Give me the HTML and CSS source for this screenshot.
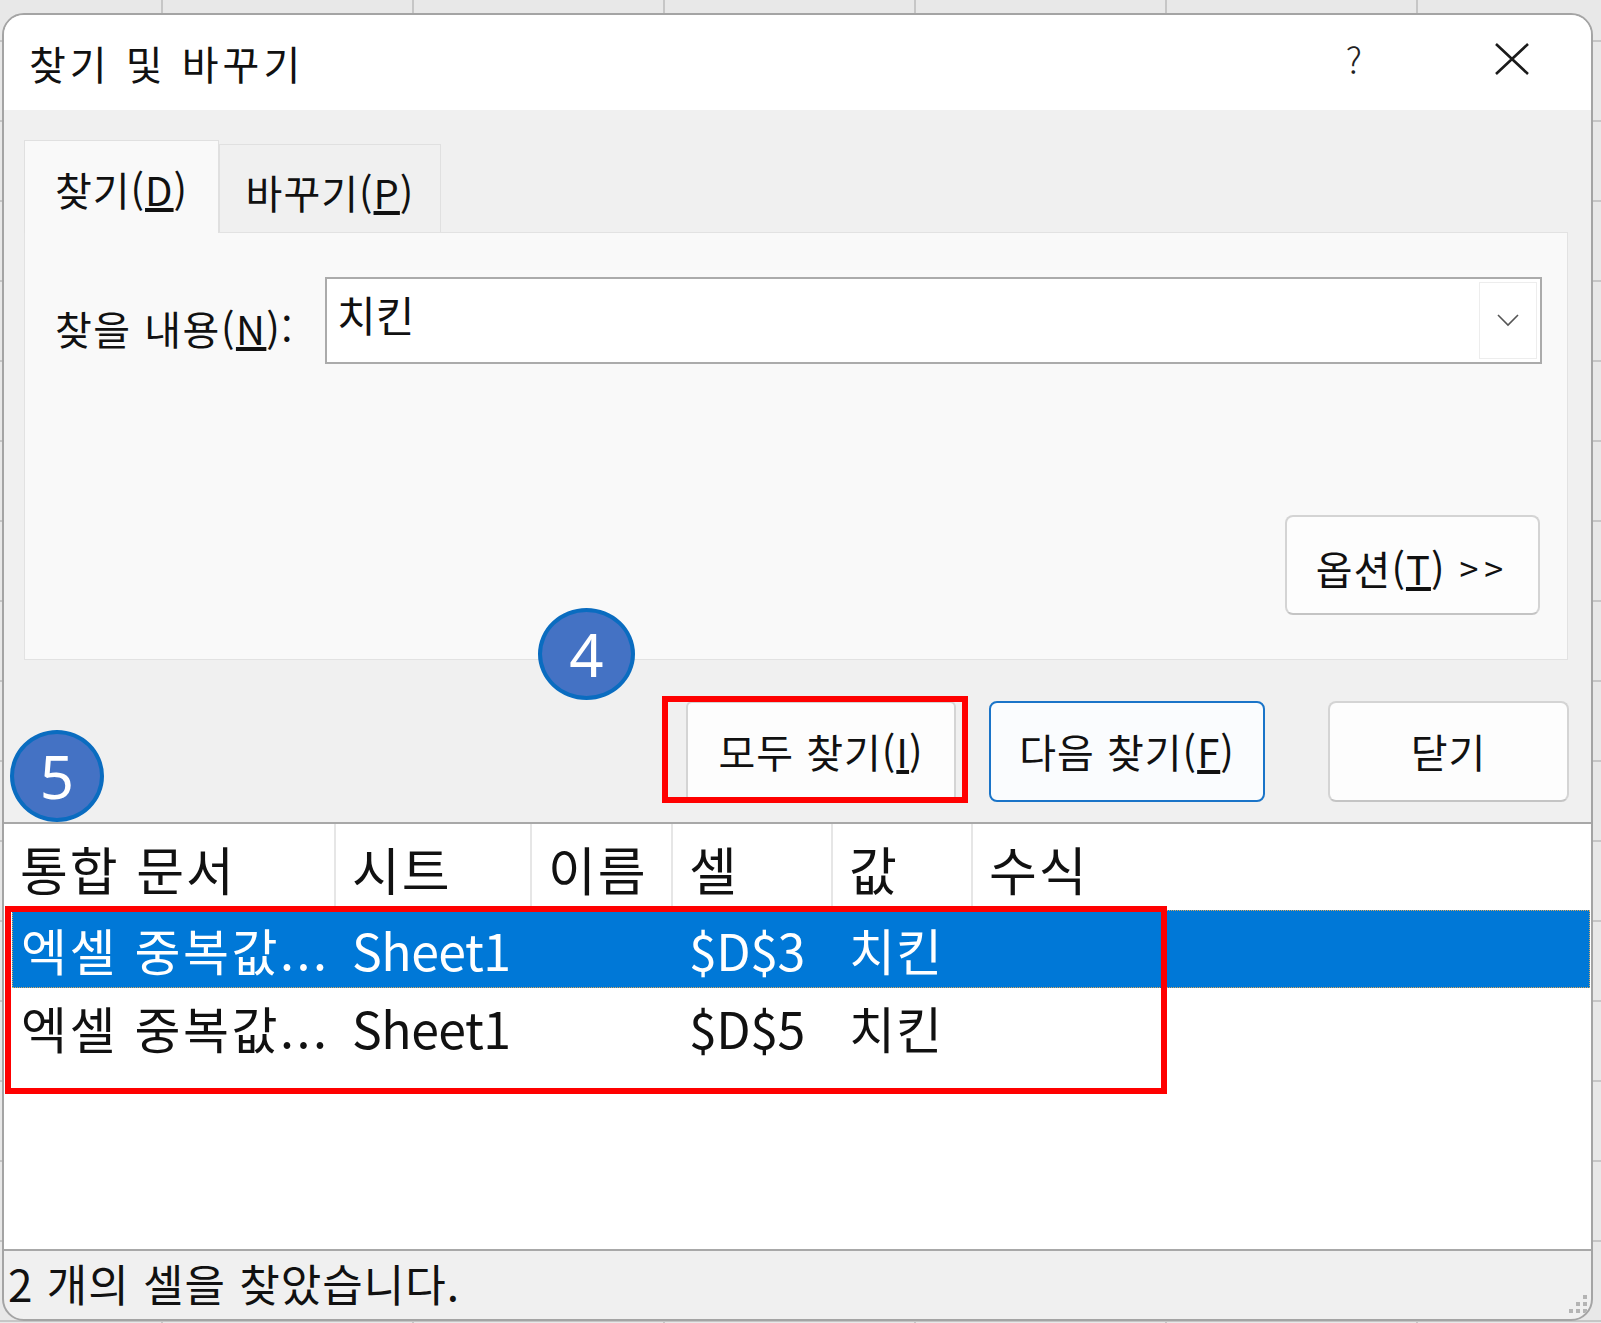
FILE: index.html
```html
<!DOCTYPE html>
<html lang="ko">
<head>
<meta charset="utf-8">
<title>찾기 및 바꾸기</title>
<link rel="stylesheet" href="styles.css">
</head>
<body>
<div class="desk">
  <div class="dialog">
    <div class="titlebar">
      <span class="title">찾기 및 바꾸기</span>
      <span class="help">?</span>
      <svg class="close" width="36" height="32" viewBox="0 0 36 32"><path d="M2 1 L34 31 M34 1 L2 31" stroke="#1b1b1b" stroke-width="2.6" fill="none"/></svg>
    </div>
    <div class="body">
      <div class="tabs">
        <div class="tab active">찾기(<u>D</u>)</div>
        <div class="tab">바꾸기(<u>P</u>)</div>
      </div>
      <div class="panel">
        <div class="findrow">
          <span class="lbl">찾을 내용(<u>N</u>):</span>
          <div class="combo">
            <span class="combo-text">치킨</span>
            <div class="combo-btn">
              <svg width="24" height="14" viewBox="0 0 24 14"><path d="M2 2 L12 12 L22 2" stroke="#555" stroke-width="1.6" fill="none"/></svg>
            </div>
          </div>
        </div>
        <div class="optrow">
          <div class="btn opt">옵션(<u>T</u>) <span class="gt">&gt;&gt;</span></div>
        </div>
      </div>
      <div class="actions">
        <div class="btn findall">모두 찾기(<u>I</u>)</div>
        <div class="btn findnext">다음 찾기(<u>F</u>)</div>
        <div class="btn closebtn">닫기</div>
      </div>
    </div>
    <div class="results">
      <div class="rgrid rhead">
        <div class="hc">통합 문서</div>
        <div class="hc">시트</div>
        <div class="hc">이름</div>
        <div class="hc">셀</div>
        <div class="hc">값</div>
        <div class="hc last">수식</div>
      </div>
      <div class="rgrid rrow sel">
        <div class="c first">엑셀 중복값...</div>
        <div class="c latin">Sheet1</div>
        <div class="c"></div>
        <div class="c latin">$D$3</div>
        <div class="c">치킨</div>
        <div class="c"></div>
      </div>
      <div class="rgrid rrow">
        <div class="c first">엑셀 중복값...</div>
        <div class="c latin">Sheet1</div>
        <div class="c"></div>
        <div class="c latin">$D$5</div>
        <div class="c">치킨</div>
        <div class="c"></div>
      </div>
    </div>
    <div class="status">
      <span>2 개의 셀을 찾았습니다.</span>
      <svg class="grip" width="24" height="22" viewBox="0 0 24 22">
        <rect x="18" y="0" width="4" height="4" fill="#b4b4b4"/>
        <rect x="11" y="7" width="4" height="4" fill="#b4b4b4"/>
        <rect x="18" y="7" width="4" height="4" fill="#b4b4b4"/>
        <rect x="4" y="14" width="4" height="4" fill="#b4b4b4"/>
        <rect x="11" y="14" width="4" height="4" fill="#b4b4b4"/>
        <rect x="18" y="14" width="4" height="4" fill="#b4b4b4"/>
      </svg>
    </div>

    <div class="mark circle4">4</div>
    <div class="mark circle5">5</div>
    <div class="redbox red1"></div>
    <div class="redbox red2"></div>
  </div>
</div>
</body>
</html>
```
FILE: styles.css
```css
* { box-sizing: border-box; }
html, body { margin: 0; padding: 0; }
body {
  width: 1601px;
  height: 1323px;
  overflow: hidden;
  font-family: "Noto Sans CJK KR", "Noto Sans", sans-serif;
  color: #111;
  background-color: #e8e8e8;
  background-image:
    linear-gradient(to right, #c6c6c6 2px, transparent 2px),
    linear-gradient(to bottom, #c6c6c6 2px, transparent 2px);
  background-size: 251px 100%, 100% 80px;
  background-position: 161px 0, 0 40px;
}
.desk { padding: 13px 0 0 2px; }
.dialog {
  position: relative;
  width: 1591px;
  height: 1308px;
  border: 2px solid #a4a4a4;
  border-radius: 22px;
  background: #f0f0f0;
  overflow: hidden;
  display: flex;
  flex-direction: column;
}
.titlebar {
  height: 95px;
  background: #ffffff;
  display: flex;
  align-items: center;
  padding: 0 61px 0 25px;
}
.title { font-size: 40px; letter-spacing: 4px; flex: 1; padding-top: 2px; }
.help { font-size: 36px; font-weight: 300; color: #222; margin-right: 132px; padding-bottom: 8px; }
.close { display: block; margin-top: -6px; }

.body { padding: 30px 23px 0 20px; }
.tabs { display: flex; align-items: flex-end; height: 92px; }
.tab {
  height: 88px;
  width: 222px;
  font-size: 40px;
  display: flex;
  align-items: center;
  justify-content: center;
  border: 1px solid #e0e0e0;
  border-bottom: none;
  background: #f0f0f0;
  letter-spacing: 1px;
  padding-top: 8px;
}
.tab.active {
  height: 93px;
  width: 195px;
  background: #f9f9f9;
  margin-bottom: -1px;
  position: relative;
  z-index: 1;
  padding-top: 4px;
}
.panel {
  height: 428px;
  background: #f9f9f9;
  border: 1px solid #e2e2e2;
  display: flex;
  flex-direction: column;
}
.findrow {
  display: flex;
  padding: 44px 25px 0 30px;
}
.lbl {
  width: 270px;
  font-size: 40px;
  padding-top: 22px;
  letter-spacing: 1.5px;
}
.combo {
  flex: 1;
  height: 87px;
  background: #fff;
  border: 2px solid #ababab;
  display: flex;
  justify-content: space-between;
}
.combo-text { font-size: 42px; padding: 10px 0 0 10px; line-height: 1.2; }
.combo-btn {
  width: 58px;
  margin: 3px 3px 3px 0;
  border: 1px solid #ededed;
  display: flex;
  align-items: center;
  justify-content: center;
}
.optrow { margin-top: auto; display: flex; justify-content: flex-end; padding: 0 27px 44px 0; }
.btn {
  display: flex;
  align-items: center;
  justify-content: center;
  font-size: 40px;
  background: #fdfdfd;
  border: 2px solid #d4d4d4;
  border-bottom-color: #c4c4c4;
  border-radius: 8px;
  letter-spacing: 1px;
}
.opt { width: 255px; height: 100px; padding-top: 6px; }
.gt { margin-left: 14px; letter-spacing: 6px; font-size: 34px; }
.actions {
  display: flex;
  justify-content: flex-end;
  margin-top: 41px;
  height: 101px;
  margin-right: -1px;
}
.findall { width: 270px; border-radius: 6px; }
.findnext { width: 276px; margin-left: 33px; border: 2px solid #1a74c8; background: #fafcfe; }
.closebtn { width: 241px; margin-left: 63px; }

.results {
  margin-top: 20px;
  height: 430px;
  background: #fff;
  border-top: 2px solid #a8a8a8;
  border-bottom: 2px solid #a8a8a8;
}
.rgrid {
  display: grid;
  grid-template-columns: 332px 196px 141px 160px 140px 1fr;
}
.rhead { height: 86px; }
.hc {
  font-size: 52px;
  padding-left: 16px;
  border-right: 2px solid #e6e6e6;
  display: flex;
  align-items: center;
  padding-top: 4px;
  letter-spacing: 2px;
}
.hc.last { border-right: none; }
.rrow { height: 78px; }
.c {
  font-size: 50px;
  padding-left: 16px;
  display: flex;
  align-items: center;
  white-space: nowrap;
  letter-spacing: 1px;
}
.c.first { padding-left: 17px; letter-spacing: 2.5px; }
.c.latin { letter-spacing: -0.5px; }
.sel {
  grid-template-columns: 324px 196px 141px 160px 140px 1fr;
  background: #0078d7;
  color: #fff;
  margin: 0 1px 0 8px;
  outline: 1px dotted #d8a860;
  outline-offset: -1px;
}
.sel .c.first { padding-left: 9px; }

.status {
  flex: 1;
  display: flex;
  align-items: center;
  font-size: 44px;
  padding: 0 0 4px 4px;
  letter-spacing: 1px;
  position: relative;
}
.grip { position: absolute; right: 2px; bottom: 2px; }

.mark {
  position: absolute;
  border-radius: 50%;
  background: #4472c4;
  border: 4px solid #0a6cc0;
  color: #fff;
  font-family: "Noto Sans", sans-serif;
  font-size: 60px;
  display: flex;
  align-items: center;
  justify-content: center;
  line-height: 1;
  z-index: 5;
}
.circle4 { left: 534px; top: 593px; width: 97px; height: 92px; }
.circle5 { left: 6px; top: 715px; width: 94px; height: 92px; }
.redbox { position: absolute; border: 6px solid #ff0000; z-index: 4; }
.red1 { left: 658px; top: 681px; width: 306px; height: 107px; }
.red2 { left: 1px; top: 891px; width: 1162px; height: 188px; }
```
